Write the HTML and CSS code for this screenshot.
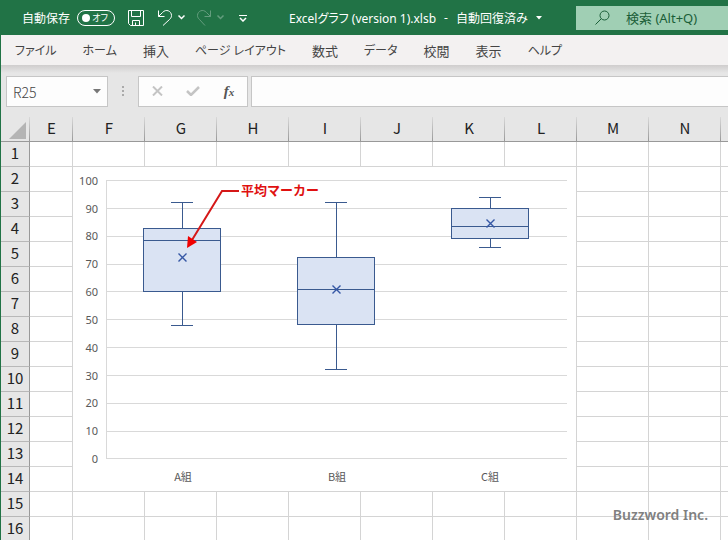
FILE: index.html
```html
<!DOCTYPE html>
<html lang="ja">
<head>
<meta charset="utf-8">
<title>Excelグラフ</title>
<link rel="stylesheet" href="styles.css">
</head>
<body>
<header class="titlebar">
  <div class="quick">
    <span class="autosave" id="autosave-label">自動保存</span>
    <button class="toggle" type="button" aria-labelledby="autosave-label"><span class="knob"></span><span class="toggle-text">オフ</span></button>
    <button class="tool save" type="button" aria-label="上書き保存">
      <svg width="16" height="16" viewBox="0 0 16 16"><path d="M.5.5h15v15H2.500l-2-2zM3.500.5v6h9v-6M4.500 15.500v-5h7v5M7.500 12.500v3"/></svg>
    </button>
    <button class="tool" type="button" aria-label="元に戻す">
      <svg width="28" height="18" viewBox="0 0 28 18"><path d="M1.500 1.500v6h6M1.500 7.500L5.500 3.500C9-.5 14.500 2 14.500 6.500c0 2-1 3-2 4L6 16.500"/><path class="thick" d="M21.500 6.500l3 3 3-3"/></svg>
    </button>
    <button class="tool faded" type="button" aria-label="やり直し">
      <svg width="28" height="18" viewBox="0 0 28 18"><path d="M14.500 1.500v6h-6M14.500 7.500L10.500 3.500C7-.5 1.500 2 1.500 6.500c0 2 1 3 2 4L9 16.500"/><path class="thick" d="M21.500 6.500l3 3 3-3"/></svg>
    </button>
    <button class="tool" type="button" aria-label="カスタマイズ">
      <svg width="8" height="8" viewBox="0 0 8 8"><path d="M0 1.500h8"/><path class="thick" d="M1 4l3 3 3-3"/></svg>
    </button>
  </div>
  <button class="doc" type="button"><span>Excelグラフ (version 1).xlsb</span><span>-</span><span>自動回復済み</span><svg width="6" height="4" viewBox="0 0 6 4"><path d="M0 0h6L3 3.500z"/></svg></button>
  <label class="search">
    <svg width="15" height="15" viewBox="0 0 15 15"><circle cx="9.500" cy="5.500" r="4.500"/><path d="M6.300 8.700L.5 14.500"/></svg>
    <input type="search" placeholder="検索 (Alt+Q)" aria-label="検索">
  </label>
</header>

<nav class="tabs">
  <button type="button">ファイル</button>
  <button type="button">ホーム</button>
  <button class="kanji" type="button">挿入</button>
  <button type="button">ページ レイアウト</button>
  <button class="kanji" type="button">数式</button>
  <button type="button">データ</button>
  <button class="kanji" type="button">校閲</button>
  <button class="kanji" type="button">表示</button>
  <button type="button">ヘルプ</button>
</nav>

<section class="formula">
  <div class="box namebox">
    <input type="text" value="R25" aria-label="名前ボックス">
    <button type="button" aria-label="名前の一覧"><svg width="8" height="5" viewBox="0 0 8 5"><path d="M0 0h8L4 4.500z"/></svg></button>
  </div>
  <svg class="grip" width="2" height="10" viewBox="0 0 2 10"><path d="M0 0h2v2H0zM0 4h2v2H0zM0 8h2v2H0z"/></svg>
  <div class="box actions">
    <button type="button" aria-label="キャンセル"><svg width="11" height="10" viewBox="0 0 11 10"><path class="mark" d="M1 .5l9 9M10 .5l-9 9"/></svg></button>
    <button type="button" aria-label="入力"><svg width="14" height="10" viewBox="0 0 14 10"><path class="mark check" d="M1 5l4 4 8-8"/></svg></button>
    <button class="fx" type="button" aria-label="関数の挿入">f<small>x</small></button>
  </div>
  <input class="box entry" type="text" aria-label="数式バー">
</section>

<main class="sheet">
  <table class="grid">
    <colgroup><col class="c-row"><col class="c-e"><col span="10"></colgroup>
    <thead>
      <tr><td class="corner"><svg width="17" height="17" viewBox="0 0 17 17"><path d="M17 0v17H0z"/></svg></td><th>E</th><th>F</th><th>G</th><th>H</th><th>I</th><th>J</th><th>K</th><th>L</th><th>M</th><th>N</th><th></th></tr>
    </thead>
    <tbody>
      <tr><th>1</th><td></td><td></td><td></td><td></td><td></td><td></td><td></td><td></td><td></td><td></td><td></td></tr>
      <tr><th>2</th><td></td><td></td><td></td><td></td><td></td><td></td><td></td><td></td><td></td><td></td><td></td></tr>
      <tr><th>3</th><td></td><td></td><td></td><td></td><td></td><td></td><td></td><td></td><td></td><td></td><td></td></tr>
      <tr><th>4</th><td></td><td></td><td></td><td></td><td></td><td></td><td></td><td></td><td></td><td></td><td></td></tr>
      <tr><th>5</th><td></td><td></td><td></td><td></td><td></td><td></td><td></td><td></td><td></td><td></td><td></td></tr>
      <tr><th>6</th><td></td><td></td><td></td><td></td><td></td><td></td><td></td><td></td><td></td><td></td><td></td></tr>
      <tr><th>7</th><td></td><td></td><td></td><td></td><td></td><td></td><td></td><td></td><td></td><td></td><td></td></tr>
      <tr><th>8</th><td></td><td></td><td></td><td></td><td></td><td></td><td></td><td></td><td></td><td></td><td></td></tr>
      <tr><th>9</th><td></td><td></td><td></td><td></td><td></td><td></td><td></td><td></td><td></td><td></td><td></td></tr>
      <tr><th>10</th><td></td><td></td><td></td><td></td><td></td><td></td><td></td><td></td><td></td><td></td><td></td></tr>
      <tr><th>11</th><td></td><td></td><td></td><td></td><td></td><td></td><td></td><td></td><td></td><td></td><td></td></tr>
      <tr><th>12</th><td></td><td></td><td></td><td></td><td></td><td></td><td></td><td></td><td></td><td></td><td></td></tr>
      <tr><th>13</th><td></td><td></td><td></td><td></td><td></td><td></td><td></td><td></td><td></td><td></td><td></td></tr>
      <tr><th>14</th><td></td><td></td><td></td><td></td><td></td><td></td><td></td><td></td><td></td><td></td><td></td></tr>
      <tr><th>15</th><td></td><td></td><td></td><td></td><td></td><td></td><td></td><td></td><td></td><td></td><td></td></tr>
      <tr><th>16</th><td></td><td></td><td></td><td></td><td></td><td></td><td></td><td></td><td></td><td></td><td></td></tr>
    </tbody>
  </table>

  <svg class="chart" width="505" height="326" viewBox="72 166 505 326" role="img" aria-label="箱ひげ図">
    <rect class="area" x="72.500" y="166.500" width="504" height="325"/>
    <path class="rule" d="M106 180.500h461M106 208.500h461M106 236.500h461M106 264.500h461M106 291.500h461M106 319.500h461M106 347.500h461M106 375.500h461M106 403.500h461M106 431.500h461M106 458.500h461M106.500 180v279"/>
    <g class="scale">
      <text x="98" y="185">100</text><text x="98" y="213">90</text><text x="98" y="240">80</text><text x="98" y="268">70</text><text x="98" y="296">60</text><text x="98" y="324">50</text><text x="98" y="352">40</text><text x="98" y="380">30</text><text x="98" y="407">20</text><text x="98" y="435">10</text><text x="98" y="463">0</text>
    </g>
    <g class="names">
      <text x="183" y="481">A組</text><text x="337" y="481">B組</text><text x="490" y="481">C組</text>
    </g>
    <g class="plot">
      <rect x="143.500" y="228.500" width="77" height="63"/>
      <path d="M143 240.500h78M182.500 202v26M171 202.500h22M182.500 292v33M171 325.500h22"/>
      <path class="mean" d="M178.500 253.500l8 8M186.500 253.500l-8 8"/>
      <rect x="297.500" y="257.500" width="77" height="67"/>
      <path d="M297 289.500h78M336.500 202v55M325 202.500h22M336.500 325v44M325 369.500h22"/>
      <path class="mean" d="M332.500 285.500l8 8M340.500 285.500l-8 8"/>
      <rect x="451.500" y="208.500" width="77" height="30"/>
      <path d="M451 226.500h78M490.500 197v11M479 197.500h22M490.500 239v8M479 247.500h22"/>
      <path class="mean" d="M486.500 219.500l8 8M494.500 219.500l-8 8"/>
    </g>
    <g class="callout">
      <path class="lead" d="M239 191h-17l-30 49"/>
      <path class="head" d="M187 248l1-12 9 6z"/>
      <text x="241" y="195">平均マーカー</text>
    </g>
  </svg>
  <p class="credit">Buzzword Inc.</p>
</main>
</body>
</html>
```
FILE: styles.css
```css
* { box-sizing: border-box; }

html, body { height: 100%; }

body {
  margin: 0;
  display: flex;
  flex-direction: column;
  overflow: hidden;
  border-left: 1px solid #217346;
  background: #e6e6e6;
  font-family: "Noto Sans", "Noto Sans CJK JP", sans-serif;
  font-size: 12px;
  font-feature-settings: "palt";
}

button, input {
  margin: 0;
  padding: 0;
  border: 0;
  background: none;
  color: inherit;
  font: inherit;
  font-feature-settings: inherit;
  outline: 0;
}

svg { display: block; flex: none; }

/* Title bar */
.titlebar {
  flex: none;
  display: flex;
  align-items: center;
  height: 35px;
  padding-left: 21px;
  background: #217346;
  color: #fff;
  white-space: nowrap;
}
.quick { display: flex; align-items: center; flex: none; width: 267px; gap: 13px; }
.autosave { margin-right: -6px; }
.toggle {
  display: flex;
  align-items: center;
  justify-content: space-between;
  width: 38px;
  height: 16px;
  padding: 0 6px 0 4px;
  border: 1px solid #fff;
  border-radius: 8px;
  font-size: 9px;
  line-height: 14px;
}
.knob { width: 8px; height: 8px; border-radius: 50%; background: #fff; }
.tool svg { fill: none; stroke: #fff; }
.tool .thick { stroke-width: 1.5; }
.tool.faded { opacity: 0.3; }
.faded { margin: 0 2px 0 -2px; }
.doc { display: flex; align-items: center; flex: none; gap: 8px; width: 287px; }
.doc svg { fill: #fff; }
.search {
  display: flex;
  align-items: center;
  flex: 1;
  gap: 16px;
  height: 24px;
  padding-left: 19px;
  background: #a0cfb4;
  color: #1b5e38;
}
.search svg { fill: none; stroke: #1b5e38; }
.search input { width: 100%; min-width: 0; font-size: 13px; }
.search input::placeholder { color: #1b5e38; opacity: 1; }

/* Ribbon tabs */
.tabs {
  flex: none;
  display: flex;
  height: 30px;
  padding: 2px 0 0 1px;
  background: #f3f1f1;
  color: #444;
  white-space: nowrap;
}
.tabs button { padding: 0 13px; font-size: 12px; line-height: 28px; }
.tabs .kanji { font-size: 13px; }

/* Formula bar */
.formula {
  flex: none;
  display: flex;
  align-items: center;
  height: 52px;
  padding: 0 0 0 5px;
  background: linear-gradient(#cfcdcd, #e6e6e6 8px);
}
.box { height: 31px; border: 1px solid #c6c6c6; background: #fdfdfd; }
.namebox { display: flex; align-items: center; width: 102px; padding: 0 6px; color: #444; }
.namebox input { flex: 1; min-width: 0; font-size: 14px; padding-top: 2px; font-family: "Noto Sans CJK JP", sans-serif; font-weight: 300; }
.namebox svg { fill: #777; }
.grip { margin: 0 14px; fill: #aaa; }
.actions { display: flex; width: 110px; margin-right: 3px; }
.actions button { flex: 1; display: flex; align-items: center; justify-content: center; }
.mark { fill: none; stroke: #c4c4c4; stroke-width: 2; }
.check { stroke-width: 2.5; }
.actions .fx { align-items: baseline; color: #555; font: italic bold 15px/28px "Liberation Serif", serif; }
.fx small { font-size: 11px; }
.entry { flex: 1; min-width: 0; border-right: 0; }

/* Worksheet */
.sheet { flex: 1; min-height: 0; position: relative; overflow: hidden; }
.grid {
  width: 792px;
  table-layout: fixed;
  border-collapse: separate;
  border-spacing: 0;
  background: #fff;
}
.c-row { width: 29px; }
.c-e { width: 43px; }
.grid th, .grid td {
  height: 25px;
  padding: 0;
  border: solid #d4d4d4;
  border-width: 0 1px 1px 0;
}
.grid th {
  padding-bottom: 2px;
  background: #e6e6e6;
  color: #222;
  font: 400 15px/20px "Noto Sans CJK JP", sans-serif;
}
.grid thead th, .grid .corner {
  border-bottom-color: #999;
  border-right: 0;
  background: linear-gradient(#d9d9d9, #999) right / 1px 100% no-repeat #e6e6e6;
}
.grid tbody th { border-right-color: #999; border-bottom-color: #b8b8b8; }
.corner svg { margin: 3px 0 0 8px; fill: #b4b4b4; }

/* Chart laid over the cells */
.chart { position: absolute; left: 71px; top: 49px; }
.area { fill: #fff; stroke: #d4d4d4; }
.rule { fill: none; stroke: #d9d9d9; }
.scale, .names { fill: #595959; font-size: 11px; }
.scale { text-anchor: end; }
.names { text-anchor: middle; font-family: "Noto Sans CJK JP", sans-serif; }
.plot { fill: #dae3f3; stroke: #3a5a8f; }
.plot path { fill: none; }
.plot .mean { stroke: #3557a5; stroke-width: 1.4; }
.lead { fill: none; stroke: #d51818; stroke-width: 2; }
.head { fill: #f00000; }
.callout text { fill: #e01010; font: 700 13px "Noto Sans CJK JP", sans-serif; }

.credit {
  position: absolute;
  right: 20px;
  bottom: 14px;
  margin: 0;
  color: #808080;
  font-size: 14px;
  font-weight: 600;
  line-height: 22px;
}
```
